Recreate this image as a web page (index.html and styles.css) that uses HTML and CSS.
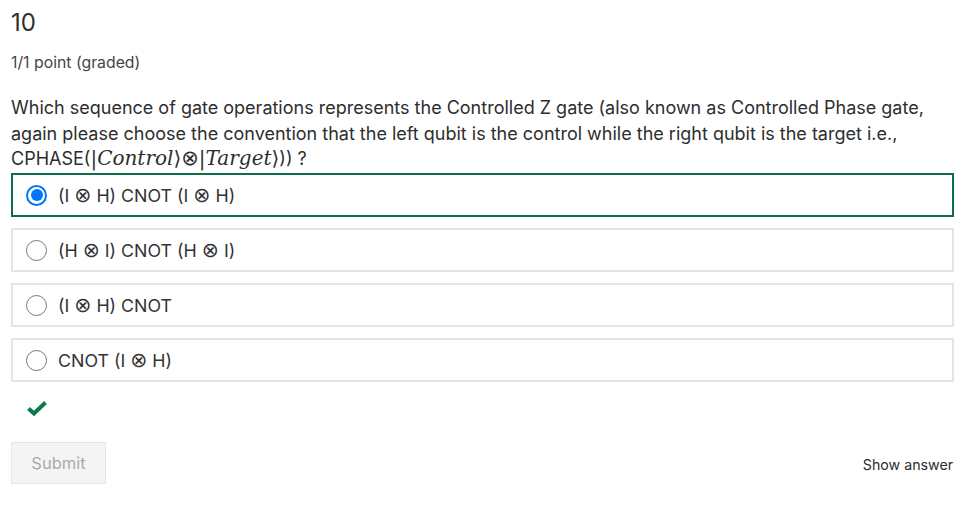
FILE: index.html
```html
<!DOCTYPE html>
<html>
<head>
<meta charset="utf-8">
<link rel="stylesheet" href="styles.css">
</head>
<body>
<div class="problem">
  <h2 class="title">10</h2>
  <div class="points">1/1 point (graded)</div>
  <p class="question">Which sequence of gate operations represents the Controlled Z gate (also known as Controlled Phase gate, again please choose the convention that the left qubit is the control while the right qubit is the target i.e., CPHASE(<span class="math"><span class="up">|</span>Control<span class="up">⟩</span><span class="otimes">⊗</span><span class="up">|</span>Target<span class="up">⟩</span></span>)) ?</p>
  <div class="options">
    <label class="option selected"><span class="radio checked"></span><span>(I <span class="otimes">⊗</span> H) CNOT (I <span class="otimes">⊗</span> H)</span></label>
    <label class="option"><span class="radio"></span><span>(H <span class="otimes">⊗</span> I) CNOT (H <span class="otimes">⊗</span> I)</span></label>
    <label class="option"><span class="radio"></span><span>(I <span class="otimes">⊗</span> H) CNOT</span></label>
    <label class="option"><span class="radio"></span><span>CNOT (I <span class="otimes">⊗</span> H)</span></label>
  </div>
  <div class="status">
    <svg width="20" height="16" viewBox="0 0 20 16"><path d="M1.5 7.5 L7 12.5 L18.5 1.5" fill="none" stroke="#0d7a4a" stroke-width="4"/></svg>
  </div>
  <div class="actions">
    <button class="submit">Submit</button>
    <span class="show">Show answer</span>
  </div>
</div>
</body>
</html>
```
FILE: styles.css
```css
body {
  margin: 0;
  background: #fff;
  font-family: Inter, "Noto Sans", sans-serif;
  color: #313131;
}
.problem {
  padding: 8px 21px 0 11px;
}
.title {
  margin: 0;
  font-size: 24px;
  font-weight: 400;
  line-height: 30px;
  color: #2f2f2f;
}
.points {
  margin-top: 15px;
  font-size: 15.8px;
  line-height: 20px;
  color: #454545;
}
.question {
  margin: 22px 0 0;
  font-size: 18px;
  line-height: 25.5px;
  color: #2e2e2e;
}
.math {
  font-family: "DejaVu Serif", "Liberation Serif", serif;
  font-style: italic;
  font-size: 20px;
  line-height: 1;
}
.math .up {
  font-style: normal;
}
.math .otimes {
  font-size: 1.05em;
}
.otimes {
  font-family: "DejaVu Sans", sans-serif;
  font-size: 1.15em;
  font-style: normal;
  line-height: 1;
}
.options {
  display: flex;
  flex-direction: column;
  gap: 11px;
  margin-top: 1.5px;
}
.option {
  display: flex;
  align-items: center;
  gap: 11px;
  height: 44px;
  box-sizing: border-box;
  padding-left: 13px;
  border: 2px solid #e4e4e4;
  font-size: 17.8px;
  color: #333;
}
.option.selected {
  border-color: #0d6e47;
}
.radio {
  width: 21px;
  height: 21px;
  box-sizing: border-box;
  border-radius: 50%;
  border: 1px solid #777;
  background: #fff;
  position: relative;
  flex: none;
}
.radio.checked {
  border: 2px solid #0075ff;
}
.radio.checked::after {
  content: "";
  position: absolute;
  left: 2.5px;
  top: 2.5px;
  width: 12px;
  height: 12px;
  border-radius: 50%;
  background: #0075ff;
}
.status {
  padding: 19px 0 0 16px;
  height: 41px;
}
.actions {
  display: flex;
  justify-content: space-between;
  align-items: center;
}
.submit {
  width: 95px;
  height: 42px;
  background: #f4f4f4;
  border: 1px solid #e6e6e6;
  color: #aaa;
  font-family: Inter, sans-serif;
  font-size: 16.5px;
  border-radius: 0;
}
.show {
  font-size: 14.2px;
  color: #2b2b2b;
  margin-right: 1px;
  margin-top: 3px;
}
```
